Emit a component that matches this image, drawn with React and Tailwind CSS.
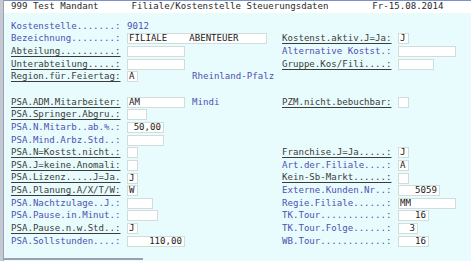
import React from "react";

const blue = "text-[#5050b4]";
const dark = "text-[#3c3c3c] underline underline-offset-[2px] decoration-1";

const Box = ({ w, v, right }) => (
  <div
    className={`${w} h-[11px] bg-white border border-[#d3dbdb] text-[#222] leading-[9px] px-[1px] whitespace-pre ${
      right ? "text-right pr-[2px]" : ""
    }`}
  >
    {v}
  </div>
);

const Label = ({ t, u }) => (
  <span className={`w-[116px] shrink-0 whitespace-pre ${u ? dark : blue}`}>{t}</span>
);

const Cell = ({ c, w }) => (
  <div className={`${w} shrink-0 flex items-center`}>
    {c && (
      <>
        <Label t={c.t} u={c.u} />
        {c.box && <Box w={c.box} v={c.v} right={c.right} />}
        {c.val && <span className={`${blue} whitespace-pre`}>{c.val}</span>}
        {c.extra && <span className={`${blue} ${c.ml} whitespace-pre`}>{c.extra}</span>}
      </>
    )}
  </div>
);

const rows = [
  [{ t: "Kostenstelle.......:", val: "9012" }, null],
  [
    { t: "Bezeichnung........:", box: "w-[140px]", v: "FILIALE    ABENTEUER" },
    { t: "Kostenst.aktiv.J=Ja:", u: true, box: "w-[11px]", v: "J" },
  ],
  [
    { t: "Abteilung..........:", u: true, box: "w-[58px]" },
    { t: "Alternative Kostst.:", box: "w-[58px]" },
  ],
  [
    { t: "Unterabteilung.....:", u: true, box: "w-[58px]" },
    { t: "Gruppe.Kos/Fili....:", u: true, box: "w-[36px]" },
  ],
  [
    { t: "Region.für.Feiertag:", u: true, box: "w-[11px]", v: "A", extra: "Rheinland-Pfalz", ml: "ml-[54px]" },
    null,
  ],
  [null, null],
  [
    { t: "PSA.ADM.Mitarbeiter:", u: true, box: "w-[58px]", v: "AM", extra: "Mindi", ml: "ml-[7px]" },
    { t: "PZM.nicht.bebuchbar:", u: true, box: "w-[11px]" },
  ],
  [{ t: "PSA.Springer.Abgru.:", u: true, box: "w-[20px]" }, null],
  [{ t: "PSA.N.Mitarb..ab.%.:", box: "w-[37px]", v: "50,00", right: true }, null],
  [{ t: "PSA.Mind.Arbz.Std..:", box: "w-[37px]" }, null],
  [
    { t: "PSA.N=Kostst.nicht.:", u: true, box: "w-[11px]" },
    { t: "Franchise.J=Ja.....:", u: true, box: "w-[11px]", v: "J" },
  ],
  [
    { t: "PSA.J=keine.Anomali:", u: true, box: "w-[11px]" },
    { t: "Art.der.Filiale....:", box: "w-[11px]", v: "A" },
  ],
  [
    { t: "PSA.Lizenz.....J=Ja.", u: true, box: "w-[11px]", v: "J" },
    { t: "Kein-Sb-Markt......:", u: true, box: "w-[11px]" },
  ],
  [
    { t: "PSA.Planung.A/X/T/W:", u: true, box: "w-[11px]", v: "W" },
    { t: "Externe.Kunden.Nr..:", box: "w-[42px]", v: "5059", right: true },
  ],
  [
    { t: "PSA.Nachtzulage..J.:", box: "w-[26px]" },
    { t: "Regie.Filiale......:", box: "w-[58px]", v: "MM" },
  ],
  [
    { t: "PSA.Pause.in.Minut.:", box: "w-[31px]" },
    { t: "TK.Tour............:", box: "w-[31px]", v: "16", right: true },
  ],
  [
    { t: "PSA.Pause.n.w.Std..:", u: true, box: "w-[11px]", v: "J" },
    { t: "TK.Tour.Folge......:", box: "w-[20px]", v: "3", right: true },
  ],
  [
    { t: "PSA.Sollstunden....:", box: "w-[58px]", v: "110,00", right: true },
    { t: "WB.Tour............:", box: "w-[31px]", v: "16", right: true },
  ],
];

export default function App() {
  return (
    <div className="w-[471px] h-[261px] overflow-hidden flex bg-[#e8fcfd] font-['DejaVu_Sans_Mono',monospace] text-[9.1px] leading-none">
      <div className="w-[4px] shrink-0 bg-[#c4cad4] border-r border-[#9aa2b0]" />
      <div className="flex-1 flex flex-col border-t border-[#7a94c8]">
        <div className="h-[12px] bg-white pl-[7px] flex items-center whitespace-pre text-[#2a2a2a]">
          {"999 Test Mandant      Filiale/Kostenstelle Steuerungsdaten        Fr-15.08.2014"}
        </div>
        <div className="h-[7px]" />
        <div className="flex flex-col pl-[7px]">
          {rows.map((r, i) => (
            <div key={i} className="h-[12.65px] flex">
              <Cell c={r[0]} w="w-[271px]" />
              <Cell c={r[1]} w="w-[180px]" />
            </div>
          ))}
        </div>
        <div className="flex-1" />
        <div className="h-[3px] flex">
          <div className="w-[139px] h-[2px] bg-[#9aa2ae]" />
        </div>
      </div>
    </div>
  );
}
